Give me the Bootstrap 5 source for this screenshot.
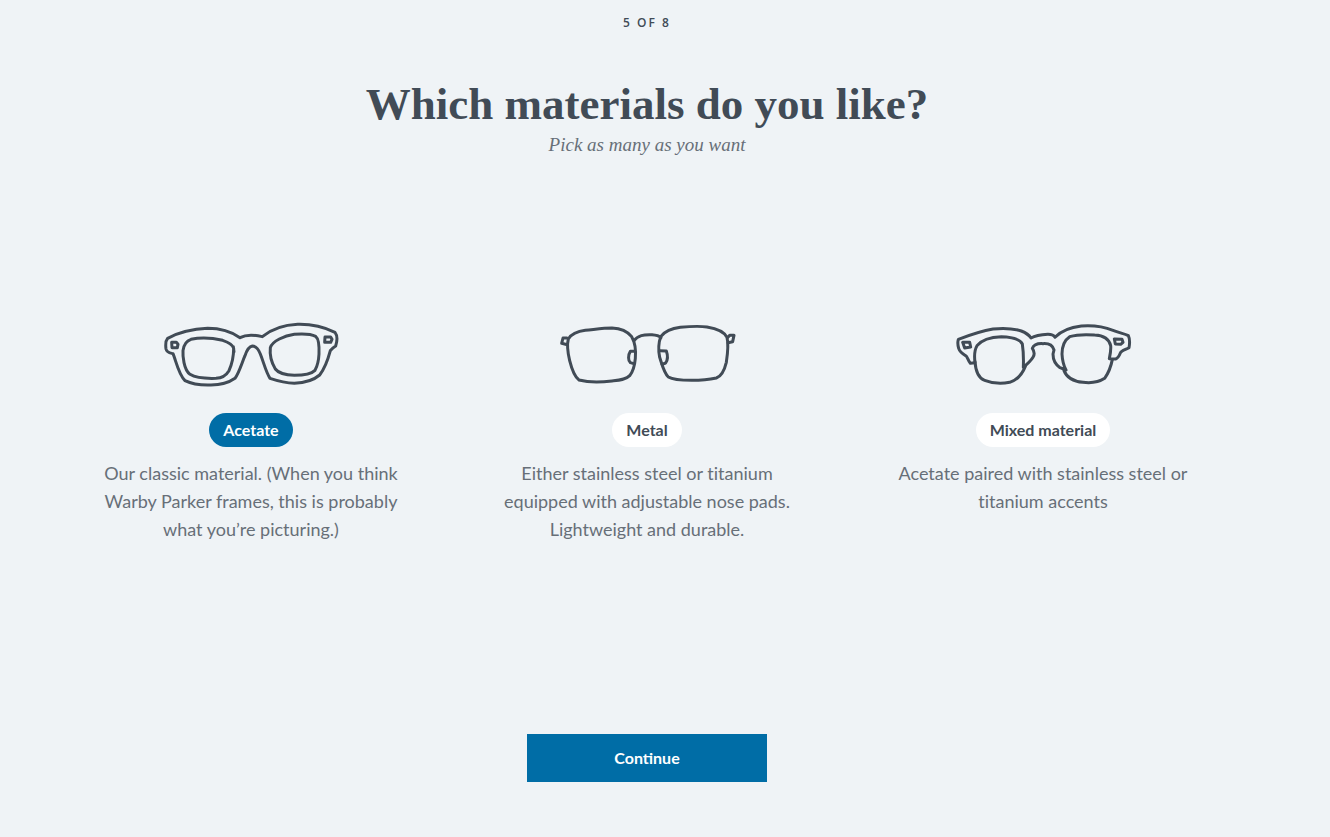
<!DOCTYPE html>
<html lang="en">
<head>
<meta charset="utf-8">
<meta name="viewport" content="width=device-width, initial-scale=1">
<title>Style quiz</title>
<link href="https://cdn.jsdelivr.net/npm/bootstrap@5.3.0/dist/css/bootstrap.min.css" rel="stylesheet">
<style>
  body { background: #eff3f6; color: #414b56; font-family: Lato, sans-serif; font-variant-ligatures: none; }
  .quiz { padding: 12px 36px 48px 0; }
  .quiz-step { font: 600 12px/22px "Open Sans", sans-serif; letter-spacing: 2px; }
  .quiz-title { font: 700 45px/52px "Liberation Serif", serif; margin-top: 44px; }
  .quiz-hint { font: italic 19px/30px "Liberation Serif", serif; color: #676f78; }
  .choices { max-width: 1188px; margin-top: 159px; }
  .glasses { width: 180px; height: 70px; fill: none; stroke: #414b56; stroke-width: 9; stroke-linejoin: round; stroke-linecap: round; }
  .choice-label { font-size: 16px; font-weight: 700; line-height: 24px; padding: 5px 14px; border: 0; margin-top: 24px;
    --bs-btn-bg: #fff; --bs-btn-color: #414b56; --bs-btn-hover-bg: #fff; --bs-btn-hover-color: #006da6;
    --bs-btn-active-bg: #006da6; --bs-btn-active-color: #fff; }
  .choice-text { font-size: 18px; line-height: 28px; color: #676f78; max-width: 300px; margin-top: 12px; }
  .btn-continue { width: 240px; height: 48px; font-size: 16px; font-weight: 700; border: 0; margin-top: 191px;
    --bs-btn-bg: #006da6; --bs-btn-color: #fff; --bs-btn-hover-bg: #005b8b; --bs-btn-hover-color: #fff; }
</style>
</head>
<body>
<main class="quiz">
  <form class="d-flex flex-column align-items-center text-center">
    <p class="quiz-step mb-0">5 OF 8</p>
    <h1 class="quiz-title mb-0">Which materials do you like?</h1>
    <p class="quiz-hint mb-0">Pick as many as you want</p>

    <div class="choices row g-0 w-100">
      <div class="col-md-4 d-flex flex-column align-items-center">
        <svg class="glasses" viewBox="0 0 540 210" aria-hidden="true">
          <path d="M20 58C50 42 95 30 140 28C175 28 205 34 237 56C255 46 275 46 304 53C330 32 365 18 410 16C450 15 485 22 522 40C530 50 529 65 524 81C516 86 512 89 508 95C500 125 490 150 476 168C455 186 420 192 400 193C375 192 345 184 327 178C315 160 308 130 298 105C290 85 280 81 274 81C262 83 257 95 252 110C243 130 235 160 222 178C205 190 175 198 150 198C120 199 90 194 72 185C52 165 45 125 36 104C28 102 18 102 15 90C13 75 14 65 20 58Z"/>
          <path d="M90 61C120 54 160 58 185 64C203 70 216 80 218 88C218 110 213 135 204 155C195 170 182 177 165 178C135 179 105 177 87 166C68 152 65 110 66 95C68 78 75 66 90 61ZM217 83L219 98"/>
          <path d="M328 86C334 66 370 50 400 46C425 44 450 45 464 52C474 60 475 80 474 105C473 125 467 145 462 154C450 166 425 169 400 169C370 168 352 162 343 150C332 132 326 105 328 86Z"/>
          <path d="M32 70L46 70L51 76L49 86L33 86ZM492 54L509 54L513 61L509 70L491 70Z"/>
        </svg>
        <input type="checkbox" class="btn-check" id="acetate" name="material" value="acetate" checked>
        <label class="btn rounded-pill choice-label" for="acetate">Acetate</label>
        <p class="choice-text mb-0">Our classic material. (When you think Warby Parker frames, this is probably what you’re picturing.)</p>
      </div>

      <div class="col-md-4 d-flex flex-column align-items-center">
        <svg class="glasses" viewBox="0 0 540 210" aria-hidden="true">
          <path d="M34 60C44 44 60 37 85 34C115 31 140 27 165 27C190 28 212 38 224 53C234 70 237 95 235 118C233 140 228 158 218 170C205 183 185 184 165 186C135 190 95 191 66 183C50 172 43 145 38 125C32 100 30 75 34 60Z"/>
          <path d="M311 53C325 35 345 28 370 25C400 22 430 21 450 24C475 28 500 35 510 55C515 75 511 110 508 130C502 155 492 172 478 177C455 182 425 184 404 184C380 184 350 184 334 174C320 160 315 135 308 115C304 95 305 70 311 53Z"/>
          <path d="M30 57L18 57L14 73L31 77M512 55L518 49L531 49L527 68L513 71"/>
          <path d="M231 65C245 45 270 48 285 47C300 48 308 52 312 56"/>
          <path d="M233 97L220 97C213 108 213 125 220 131L230 134M309 95L328 96C333 110 333 122 326 132L315 136"/>
        </svg>
        <input type="checkbox" class="btn-check" id="metal" name="material" value="metal">
        <label class="btn rounded-pill choice-label" for="metal">Metal</label>
        <p class="choice-text mb-0">Either stainless steel or titanium equipped with adjustable nose pads. Lightweight and durable.</p>
      </div>

      <div class="col-md-4 d-flex flex-column align-items-center">
        <svg class="glasses" viewBox="0 0 540 210" aria-hidden="true">
          <path d="M16 61C50 48 85 36 120 30C150 27 180 28 205 36C220 42 228 48 234 57C250 48 268 47 285 46C295 46 303 50 306 55C325 35 350 25 385 21C425 18 455 24 480 34C500 42 515 44 526 50C531 60 530 75 528 86C518 92 505 95 502 102C498 112 495 118 488 120L469 119C471 110 474 90 473 80C468 58 450 49 425 48C400 46 370 47 350 53C332 65 327 85 327 105C328 125 333 142 339 153L321 146C305 135 300 118 300 105L303 93C298 76 285 73 270 74C255 73 242 78 238 88C245 98 246 105 240 115C232 128 222 136 211 145C212 120 211 95 208 75C200 58 175 54 145 53C110 54 85 64 72 80C63 95 64 115 66 131L52 133C45 125 43 112 38 110C28 104 20 98 17 88C14 78 14 68 16 61Z"/>
          <path d="M66 128C68 158 78 178 95 184C115 192 145 195 170 190C195 182 210 160 217 142"/>
          <path d="M333 155C342 178 365 188 390 190C415 193 440 188 455 178C468 160 474 142 478 122"/>
          <path d="M29 70L50 70L53 84L35 87ZM484 60L507 61L510 70L503 76L487 75Z"/>
        </svg>
        <input type="checkbox" class="btn-check" id="mixed" name="material" value="mixed">
        <label class="btn rounded-pill choice-label" for="mixed">Mixed material</label>
        <p class="choice-text mb-0">Acetate paired with stainless steel or titanium accents</p>
      </div>
    </div>

    <button type="button" class="btn btn-continue rounded-0">Continue</button>
  </form>
</main>
<script src="https://cdn.jsdelivr.net/npm/bootstrap@5.3.0/dist/js/bootstrap.bundle.min.js"></script>
</body>
</html>
